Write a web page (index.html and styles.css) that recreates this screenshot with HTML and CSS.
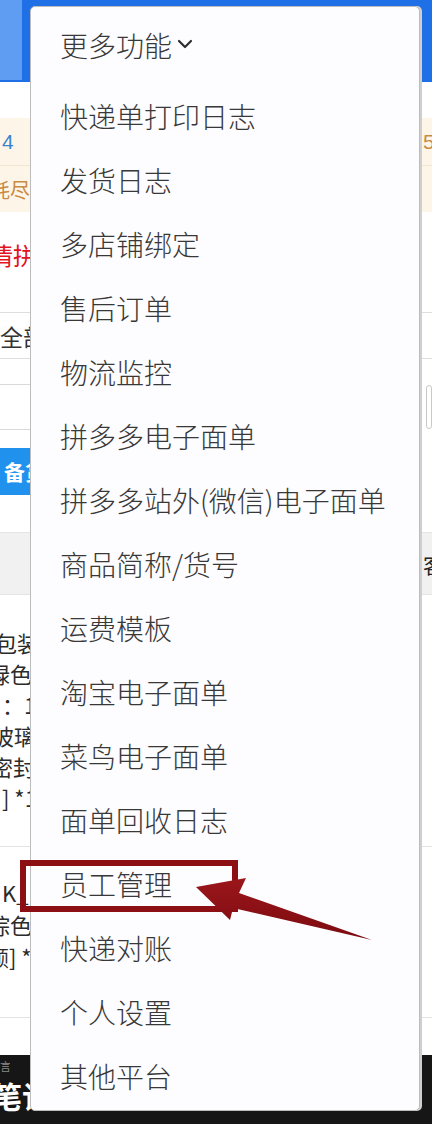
FILE: index.html
```html
<!DOCTYPE html>
<html lang="zh-CN">
<head>
<meta charset="utf-8">
<title>更多功能</title>
<link rel="stylesheet" href="styles.css">
</head>
<body>
<div class="page">
  <div class="topbar"><div class="tab"></div></div>
  <div class="gap g36"></div>
  <div class="row beige b1"><span class="l blue-t">4</span><span></span><span class="r orange-t">5:</span></div>
  <div class="row beige b2"><span class="l orange-t"><i class="shift s10">耗尽</i></span><span></span><span class="r"></span></div>
  <div class="row red-row"><span class="l red-t"><i class="shift s11">情拼</i></span><span></span><span class="r"></span></div>
  <div class="row all-row"><span class="l">全部</span><span></span><span class="r"></span></div>
  <div class="gap g25"></div>
  <div class="row input-row"><span class="l boxed"></span><span></span><span class="r"><b class="input"></b></span></div>
  <div class="gap g18"></div>
  <div class="row btn-row"><span class="l btn">备货单</span><span></span><span class="r"></span></div>
  <div class="gap g37"></div>
  <div class="row head-row"><span class="l"></span><span></span><span class="r">客</span></div>
  <div class="block block1">
    <div class="line"><i class="shift s5">包装</i></div>
    <div class="line"><i class="shift s12">绿色</i></div>
    <div class="line"><i class="shift s0">：1</i></div>
    <div class="line"><i class="shift s8">玻璃杯</i></div>
    <div class="line"><i class="shift s9">密封胆</i></div>
    <div class="line"><i class="shift s0">] *1</i></div>
  </div>
  <div class="block block2">
    <div class="line"><i class="shift s0">K_<b class="mark"></b></i></div>
    <div class="line"><i class="shift s12">棕色</i></div>
    <div class="line"><i class="shift s13">颜] *1</i></div>
  </div>
  <div class="gap g37"></div>
  <div class="dark">
    <span class="tiny">言</span>
    <span class="big"><i class="shift s8">笔记</i></span>
  </div>
</div>

<div class="menu">
  <div class="menu-head">更多功能<svg class="chev" viewBox="0 0 16 10" width="16" height="10"><polyline points="2,2 8,8 14,2" fill="none" stroke="#2e2e2e" stroke-width="2.2" stroke-linecap="round" stroke-linejoin="round"/></svg></div>
  <div class="menu-item">快递单打印日志</div>
  <div class="menu-item">发货日志</div>
  <div class="menu-item">多店铺绑定</div>
  <div class="menu-item">售后订单</div>
  <div class="menu-item">物流监控</div>
  <div class="menu-item">拼多多电子面单</div>
  <div class="menu-item">拼多多站外(微信)电子面单</div>
  <div class="menu-item">商品简称/货号</div>
  <div class="menu-item">运费模板</div>
  <div class="menu-item">淘宝电子面单</div>
  <div class="menu-item">菜鸟电子面单</div>
  <div class="menu-item">面单回收日志</div>
  <div class="menu-item">员工管理</div>
  <div class="menu-item">快递对账</div>
  <div class="menu-item">个人设置</div>
  <div class="menu-item">其他平台</div>
</div>

<div class="highlight"></div>
<svg class="arrow" viewBox="0 0 432 1124" width="432" height="1124">
  <defs>
    <linearGradient id="ag" x1="0" y1="0" x2="0" y2="1">
      <stop offset="0" stop-color="#9b161b"/>
      <stop offset="1" stop-color="#7c0b10"/>
    </linearGradient>
  </defs>
  <polygon points="196,887 246,878 239,893 372,940 233,908 230,920" fill="url(#ag)"/>
</svg>
</body>
</html>
```
FILE: styles.css
```css
* { box-sizing: border-box; margin: 0; padding: 0; }
html, body { width: 432px; height: 1124px; overflow: hidden; }
body {
  position: relative;
  background: #fff;
  color: #333;
  font-family: "Noto Sans CJK SC", "Noto Sans", sans-serif;
}
i { font-style: normal; }

.page { width: 432px; height: 1124px; overflow: hidden; }

.topbar { height: 82px; background: #1f6fe6; display: flex; }
.tab { width: 22px; height: 80px; background: #5f9df2; }

.gap { width: 100%; }
.g36 { height: 36px; }
.g25 { height: 25px; }
.g18 { height: 18px; }
.g37 { height: 37px; }

.row {
  display: grid;
  grid-template-columns: 30px 1fr 12px;
  align-items: center;
  white-space: nowrap;
  font-size: 22px;
}
.row > span { overflow: hidden; display: block; }
.row .r { padding-left: 3px; }

.shift { display: inline-block; }
.s0 { margin-left: 2px; }
.s5 { margin-left: -5px; }
.s8 { margin-left: -8px; }
.s9 { margin-left: -9px; }
.s10 { margin-left: -10px; }
.s11 { margin-left: -11px; }
.s12 { margin-left: -12px; }
.s13 { margin-left: -13px; }

.beige { background: #fdf6e8; }
.b1 { height: 48px; border-bottom: 1px solid #f3e7d2; font-family: "Liberation Sans", sans-serif; font-size: 21px; }
.b1 .l { padding-left: 2px; }
.b2 { height: 46px; font-size: 20px; }
.blue-t { color: #3a84cf; }
.orange-t { color: #c98a42; }

.red-row { height: 101px; align-items: start; padding-top: 27px; border-bottom: 1px solid #dedede; font-size: 24px; line-height: 32px; }
.red-t { color: #e3141d; }

.all-row { height: 46px; border-bottom: 1px solid #dedede; font-size: 23px; }

.input-row { height: 46px; }
.boxed { height: 46px; border-top: 1px solid #d9d9d9; border-bottom: 1px solid #d9d9d9; }
.input { display: block; height: 44px; margin-left: 3px; border: 1px solid #c9c9c9; border-radius: 4px; }

.btn-row { height: 47px; }
.btn { height: 47px; line-height: 46px; background: #2191ee; color: #fff; font-weight: 700; font-size: 21px; padding-left: 4px; }

.head-row { height: 63px; background: #f1f1f1; border-top: 1px solid #e6e6e6; border-bottom: 1px solid #e4e4e4; font-size: 21px; color: #222; }

.block { overflow: hidden; white-space: nowrap; font-size: 22px; color: #2b2b2b; border-bottom: 1px solid #e3e3e3; }
.block .line { width: 30px; overflow: hidden; }
.block1 { height: 252px; padding-top: 32px; line-height: 31px; }
.block2 { height: 171px; padding-top: 29px; line-height: 32px; }
.mark { display: inline-block; width: 4px; height: 14px; background: #3a6fd0; margin-left: 6px; vertical-align: middle; }

.dark { height: 69px; background: #161616; color: #fff; position: relative; overflow: hidden; white-space: nowrap; padding-top: 2px; }
.tiny { display: block; width: 10px; overflow: hidden; font-size: 11px; line-height: 18px; color: #8a8a8a; }
.big { display: block; width: 80px; overflow: hidden; font-size: 30px; line-height: 40px; font-weight: 700; }

/* dropdown overlay */
.menu {
  position: absolute;
  left: 30px;
  top: 6px;
  width: 390px;
  height: 1105px;
  background: #fdfcfe;
  border: 1px solid #bcbcbc;
  border-radius: 5px;
  box-shadow: 2px 0 0 #cfcfcf;
  padding: 6px 0 0 29px;
  color: #383838;
  font-size: 28px;
  font-weight: 300;
  white-space: nowrap;
}
.menu-head {
  height: 64px;
  margin-bottom: 7px;
  display: flex;
  align-items: center;
  gap: 5px;
  line-height: 64px;
}
.chev { display: block; margin-top: -2px; }
.menu-item { height: 64px; line-height: 64px; }

.highlight {
  position: absolute;
  left: 20px;
  top: 860px;
  width: 218px;
  height: 52px;
  border: 6px solid #8c0f14;
}
.arrow { position: absolute; left: 0; top: 0; pointer-events: none; }
```
